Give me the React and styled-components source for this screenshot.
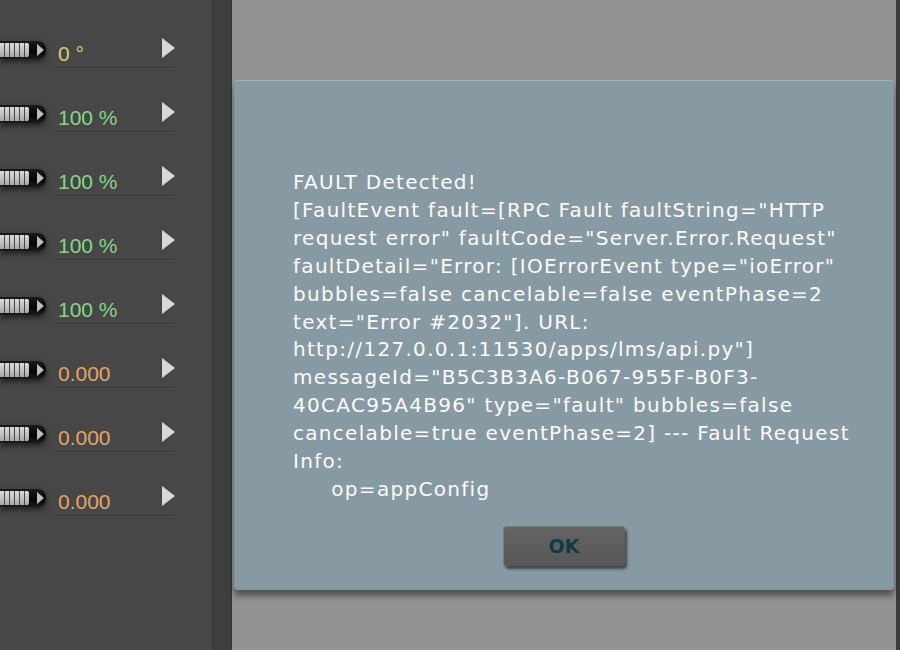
import React from 'react';
import styled, { createGlobalStyle } from 'styled-components';

const GlobalStyle = createGlobalStyle`
  html, body {
    margin: 0;
    padding: 0;
    background: #939393;
  }
`;

const Screen = styled.div`
  display: flex;
  width: 900px;
  height: 650px;
  overflow: hidden;
  font-family: "DejaVu Sans", Verdana, sans-serif;
`;

const SidePanel = styled.div`
  width: 213px;
  flex: 0 0 213px;
  padding-top: 5px;
  box-sizing: border-box;
  background: #474747;
  border-right: 1px solid #3a3a3a;
`;

const Gutter = styled.div`
  width: 18px;
  flex: 0 0 18px;
  background: #3e3e3e;
  border-right: 1px solid #353535;
`;

const Stage = styled.div`
  flex: 1;
  display: flex;
  align-items: flex-start;
  padding: 80px 0 0 2px;
  background: #939393;
  border-right: 4px solid #3a3a3a;
`;

const Row = styled.div`
  display: flex;
  align-items: flex-start;
  height: 64px;
`;

const Knob = styled.div`
  position: relative;
  flex: 0 0 46px;
  height: 18px;
  margin-top: 36px;
  margin-right: 7px;
  background: linear-gradient(#1a1a1a, #050505 60%, #1c1c1c);
  border-radius: 0 8px 8px 0;
  box-shadow: 0 3px 6px rgba(0, 0, 0, 0.55);
`;

const Grip = styled.div`
  position: absolute;
  left: 0;
  top: 2px;
  width: 29px;
  height: 14px;
  background:
    repeating-linear-gradient(90deg, transparent 0 4px, #4a4a4a 4px 5px),
    linear-gradient(#dcdcdc, #a9a9a9);
  border-radius: 0 2px 2px 0;
`;

const KnobArrow = styled.div`
  position: absolute;
  left: 37px;
  top: 3px;
  width: 0;
  height: 0;
  border-top: 6px solid transparent;
  border-bottom: 6px solid transparent;
  border-left: 7px solid #bdbdbd;
`;

const Cell = styled.div`
  display: flex;
  align-items: flex-start;
  justify-content: space-between;
  width: 122px;
  height: 63px;
  padding-left: 5px;
  box-sizing: border-box;
  border-bottom: 1px solid #383838;
  box-shadow: 0 1px 0 #505050;
`;

const Value = styled.span`
  margin-top: 37px;
  font-family: "Liberation Sans", Arial, sans-serif;
  font-size: 21px;
  color: ${(p) => p.color};
`;

const Play = styled.div`
  width: 0;
  height: 0;
  margin-top: 33px;
  border-top: 10px solid transparent;
  border-bottom: 10px solid transparent;
  border-left: 13px solid #d8d8d8;
`;

const Dialog = styled.div`
  display: flex;
  flex-direction: column;
  align-items: center;
  width: 660px;
  height: 510px;
  box-sizing: border-box;
  padding: 88px 0 0 0;
  background: #879aa3;
  border-top: 1px solid #a3b4bc;
  border-radius: 4px;
  box-shadow: 0 6px 6px rgba(0, 0, 0, 0.45);
`;

const Message = styled.div`
  align-self: stretch;
  padding-left: 59px;
  font-size: 20px;
  line-height: 27.9px;
  letter-spacing: 1.3px;
  color: #fbfbfb;
  white-space: pre;
`;

const OkButton = styled.button`
  margin-top: 22px;
  width: 122px;
  height: 40px;
  border: none;
  border-radius: 4px;
  background: linear-gradient(#646464, #575757);
  box-shadow: 2px 3px 3px rgba(0, 0, 0, 0.55), inset 1px 1px 0 #7a7a7a;
  font-family: "DejaVu Sans", Verdana, sans-serif;
  font-weight: bold;
  font-size: 19px;
  color: #0f3b44;
`;

const rows = [
  { value: '0 °', color: '#d7cf6e' },
  { value: '100 %', color: '#82d97e' },
  { value: '100 %', color: '#82d97e' },
  { value: '100 %', color: '#82d97e' },
  { value: '100 %', color: '#82d97e' },
  { value: '0.000', color: '#e6a462' },
  { value: '0.000', color: '#e6a462' },
  { value: '0.000', color: '#e6a462' },
];

const message = [
  'FAULT Detected!',
  '[FaultEvent fault=[RPC Fault faultString="HTTP',
  'request error" faultCode="Server.Error.Request"',
  'faultDetail="Error: [IOErrorEvent type="ioError"',
  'bubbles=false cancelable=false eventPhase=2',
  'text="Error #2032"]. URL:',
  'http://127.0.0.1:11530/apps/lms/api.py"]',
  'messageId="B5C3B3A6-B067-955F-B0F3-',
  '40CAC95A4B96" type="fault" bubbles=false',
  'cancelable=true eventPhase=2] --- Fault Request',
  'Info:',
  '     op=appConfig',
].join('\n');

export default function App() {
  return (
    <>
      <GlobalStyle />
      <Screen>
        <SidePanel>
          {rows.map((r, i) => (
            <Row key={i}>
              <Knob>
                <Grip />
                <KnobArrow />
              </Knob>
              <Cell>
                <Value color={r.color}>{r.value}</Value>
                <Play />
              </Cell>
            </Row>
          ))}
        </SidePanel>
        <Gutter />
        <Stage>
          <Dialog>
            <Message>{message}</Message>
            <OkButton>OK</OkButton>
          </Dialog>
        </Stage>
      </Screen>
    </>
  );
}
